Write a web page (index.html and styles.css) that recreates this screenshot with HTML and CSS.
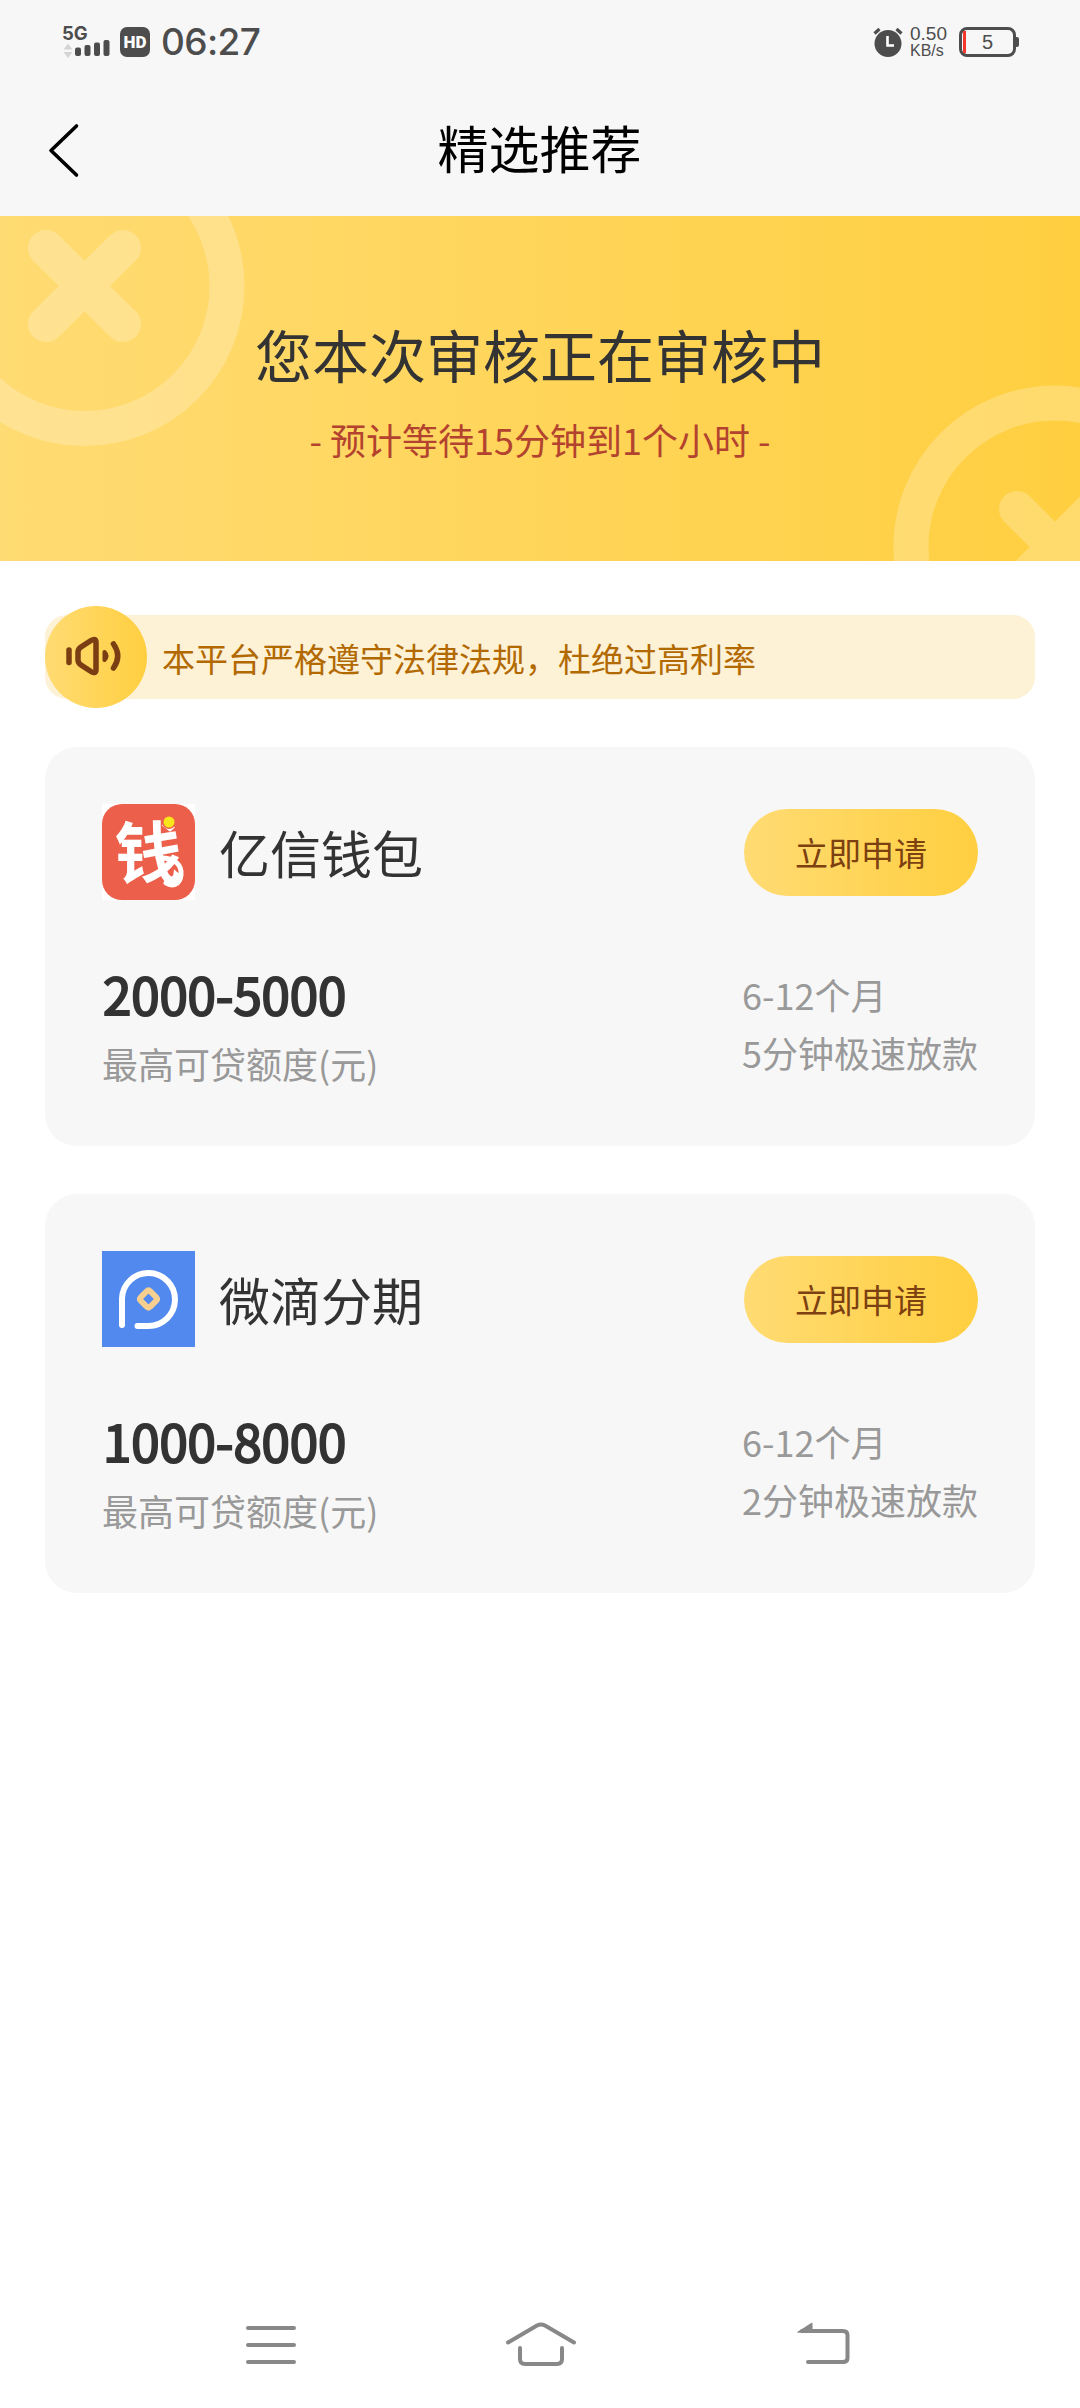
FILE: index.html
```html
<!DOCTYPE html>
<html lang="zh-CN">
<head>
<meta charset="utf-8">
<title>精选推荐</title>
<link rel="stylesheet" href="styles.css">
</head>
<body>
<div class="screen">
  <header class="top">
    <div class="status">
      <div class="status-left">
        <div class="signal">
          <span class="net">5G</span>
          <svg width="50" height="18" viewBox="0 0 50 18">
            <path d="M1.500 8.500L6 2.500L10.500 8.500ZM1.500 11L6 17L10.500 11Z" fill="#d4d4d4"/>
            <g fill="#4d4d4d">
              <rect x="13" y="6.500" width="6" height="8.500" rx="2"/>
              <rect x="22.500" y="4" width="6" height="11" rx="2"/>
              <rect x="32" y="1.500" width="6" height="13.500" rx="2"/>
              <rect x="41.500" y="-1" width="6" height="16" rx="2"/>
            </g>
          </svg>
        </div>
        <span class="hd">HD</span>
        <span class="time">06:27</span>
      </div>
      <div class="status-right">
        <svg width="30" height="32" viewBox="0 0 30 32">
          <circle cx="15" cy="17.500" r="13.500" fill="#4d4d4d"/>
          <path d="M1.500 7.500L6.500 3M28.500 7.500L23.500 3" stroke="#4d4d4d" stroke-width="3.200" fill="none"/>
          <path d="M14.500 10V19.500H21" stroke="#fff" stroke-width="2.600" fill="none"/>
        </svg>
        <div class="speed"><span class="rate">0.50</span><span class="unit">KB/s</span></div>
        <div class="battery"><span>5</span></div>
      </div>
    </div>
    <div class="nav">
      <svg class="back" width="36" height="60" viewBox="0 0 36 60"><path d="M30.500 6L5 30.500L30.500 55" fill="none" stroke="#000" stroke-width="3.600" stroke-linecap="round" stroke-linejoin="round"/></svg>
      <h1>精选推荐</h1>
    </div>
  </header>

  <section class="banner">
    <svg class="deco" width="1080" height="345" viewBox="0 0 1080 345">
      <g fill="none" stroke="#fff" stroke-opacity=".23">
        <circle cx="84.500" cy="70" r="142.500" stroke-width="35"/>
        <circle cx="1055" cy="331" r="144" stroke-width="35"/>
      </g>
      <g fill="none" stroke="#fff" stroke-width="36" stroke-linecap="round" opacity=".23">
        <path d="M46 32L123 108M123 32L46 108"/>
        <path d="M1017 293L1093 369M1093 293L1017 369"/>
      </g>
    </svg>
    <h2>您本次审核正在审核中</h2>
    <p>- 预计等待15分钟到1个小时 -</p>
  </section>

  <main>
    <div class="notice">
      <span class="horn">
        <svg width="102" height="102" viewBox="0 0 102 102" fill="none" stroke="#7b3e12" stroke-width="5.500" stroke-linecap="round" stroke-linejoin="round">
          <path d="M24 44V56.500M33 46Q33 43 36 41L46 34.500Q51 31.500 51 36.500V63.500Q51 68.500 46 65.500L36 59Q33 57 33 54ZM68.500 38Q77 50 68.500 62"/>
          <path d="M59.500 46Q63.500 50 59.500 54Z" stroke-width="4" fill="#7b3e12"/>
        </svg>
      </span>
      <p>本平台严格遵守法律法规，杜绝过高利率</p>
    </div>

    <article class="card">
      <div class="card-head">
        <svg class="logo" width="93" height="96" viewBox="0 0 93 96">
          <rect width="93" height="96" fill="#fff"/>
          <rect width="93" height="96" rx="20" fill="#ec5f4a"/>
          <text class="logo-char" x="46" y="74" text-anchor="middle">钱</text>
          <path d="M56 54C74 53 80 62 79 71C78 81 70 83 64 79" fill="none" stroke="#fff" stroke-width="5" stroke-linecap="round"/>
          <circle cx="67" cy="18" r="7" fill="#ec5f4a"/>
          <circle cx="67" cy="18" r="5.500" fill="#f8e51c"/>
        </svg>
        <h3>亿信钱包</h3>
        <button>立即申请</button>
      </div>
      <div class="card-body">
        <div class="quota"><strong>2000-5000</strong><span>最高可贷额度(元)</span></div>
        <div class="terms"><span>6-12个月</span><span>5分钟极速放款</span></div>
      </div>
    </article>

    <article class="card">
      <div class="card-head">
        <svg class="logo" width="93" height="96" viewBox="0 0 93 96">
          <rect width="93" height="96" fill="#5289ef"/>
          <path d="M20 74V47.500A26.500 26.500 0 1 1 46.500 75H35.500" fill="none" stroke="#fff" stroke-width="6" stroke-linecap="round"/>
          <path d="M44.500 40.500Q46.500 38.500 48.500 40.500L54 46Q56 48 54 50L48.500 55.500Q46.500 57.500 44.500 55.500L39 50Q37 48 39 46Z" fill="none" stroke="#f7cf8f" stroke-width="6"/>
        </svg>
        <h3>微滴分期</h3>
        <button>立即申请</button>
      </div>
      <div class="card-body">
        <div class="quota"><strong>1000-8000</strong><span>最高可贷额度(元)</span></div>
        <div class="terms"><span>6-12个月</span><span>2分钟极速放款</span></div>
      </div>
    </article>
  </main>

  <footer class="sysnav">
    <svg width="54" height="48" viewBox="0 0 54 48"><path d="M4 7H50M4 24H50M4 41H50"/></svg>
    <svg class="home" width="74" height="48" viewBox="0 0 74 48"><path d="M4 21.500L33 4.500Q37 2.500 41 4.500L70 21.500M16 27V38Q16 43 21 43H53Q58 43 58 38V27"/></svg>
    <svg width="56" height="48" viewBox="0 0 56 48"><path d="M6 10H47Q51.500 10 51.500 14V37Q51.500 41 47 41H12"/><path class="tip" d="M2 11L16 2V11Z"/></svg>
  </footer>
</div>
</body>
</html>
```
FILE: styles.css
```css
* { box-sizing: border-box; margin: 0; padding: 0; }
body {
  background: #fff;
  color: #333;
  font-family: "Noto Sans CJK SC", sans-serif;
}
h1, h2, h3 { font-weight: 400; }
svg { display: block; }
.screen { width: 1080px; height: 2408px; display: flex; flex-direction: column; overflow: hidden; }

.top { height: 216px; background: #f7f7f7; }
.status {
  height: 84px;
  padding: 0 61px 0 62px;
  display: flex;
  justify-content: space-between;
  align-items: center;
  color: #4d4d4d;
}
.status-left, .status-right { display: flex; align-items: center; }
.signal { width: 50px; height: 34px; display: flex; flex-direction: column; }
.signal svg { overflow: visible; }
.net { font: 700 18.500px/16px Inter, sans-serif; }
.hd {
  width: 30px; height: 30px; margin-left: 8px;
  border-radius: 7px; background: #4d4d4d; color: #fff;
  font: 900 17px/30px Roboto, sans-serif; text-align: center;
}
.time { margin-left: 11px; font: 500 37px/40px Inter, sans-serif; letter-spacing: -.6px; }
.speed { margin-left: 7px; width: 49px; display: flex; flex-direction: column; font-family: "Liberation Sans", sans-serif; }
.rate { font-size: 19px; line-height: 17px; }
.unit { font-size: 16px; line-height: 17px; }
.battery {
  position: relative;
  width: 57px; height: 30px; margin-right: 3px;
  border: 3px solid #4d4d4d; border-radius: 8px;
  font: 20px/25px "Liberation Sans", sans-serif; text-align: center;
}
.battery::before { content: ""; position: absolute; left: 1px; top: 1px; width: 3px; height: 22px; background: #f5372d; }
.battery::after { content: ""; position: absolute; right: -6px; top: 7px; width: 3px; height: 10px; border-radius: 0 2px 2px 0; background: #4d4d4d; }
.nav { height: 132px; padding: 0 46px 0 46px; display: flex; align-items: center; }
.nav h1 { flex: 1; margin-right: 37px; text-align: center; color: #000; font-size: 51px; line-height: 60px; padding-bottom: 6px; }

.banner {
  position: relative;
  height: 345px;
  padding-top: 97px;
  overflow: hidden;
  text-align: center;
  background: linear-gradient(90deg, #ffdb73, #ffcf40);
}
.deco { position: absolute; left: 0; top: 0; }
.banner h2 { position: relative; font-size: 57px; line-height: 80px; }
.banner p { position: relative; margin-top: 20px; font-size: 36px; line-height: 52px; color: #b3432f; }

main { flex: 1; padding: 54px 45px 0; }
.notice {
  height: 84px;
  display: flex;
  align-items: center;
  border-radius: 22px;
  background: #fdf1d6;
  color: #b26900;
  font-size: 33px;
}
.horn { width: 102px; height: 102px; margin-right: 15px; border-radius: 50%; background: linear-gradient(90deg, #ffdb73, #ffcf40); }
.notice p { padding-top: 1px; }

.card { height: 399px; margin-top: 48px; padding: 57px 57px 0; border-radius: 32px; background: #f7f7f7; }
.card-head { height: 96px; display: flex; align-items: center; }
.card h3 { flex: 1; padding-left: 24px; font-size: 51px; line-height: 70px; }
.card button {
  width: 234px; height: 87px; border: 0; border-radius: 44px;
  background: linear-gradient(90deg, #ffdb73, #ffcf40);
  color: #7d4010; font: 33px "Noto Sans CJK SC", sans-serif;
}
.logo { overflow: visible; }
.logo-char { font-family: "Noto Sans CJK SC", sans-serif; font-size: 67px; font-weight: 700; fill: #fff; }
.card-body { margin-top: 63px; display: flex; justify-content: space-between; color: #999; font-size: 36px; }
.quota, .terms { display: flex; flex-direction: column; }
.quota strong { padding-left: 1px; color: #333; font-size: 51px; letter-spacing: -.1px; font-weight: 400; line-height: 60px; -webkit-text-stroke: 2px #333; }
.quota span { margin-top: 10px; line-height: 60px; }
.terms { padding-top: 2px; line-height: 58px; }

.sysnav { height: 87px; padding: 0 228px 0 244px; display: flex; fill: none; stroke: #888; stroke-width: 4px; stroke-linecap: round; stroke-linejoin: round; }
.home { margin: 0 218px 0 206px; }
.tip { fill: #888; stroke-width: 1px; }
```
